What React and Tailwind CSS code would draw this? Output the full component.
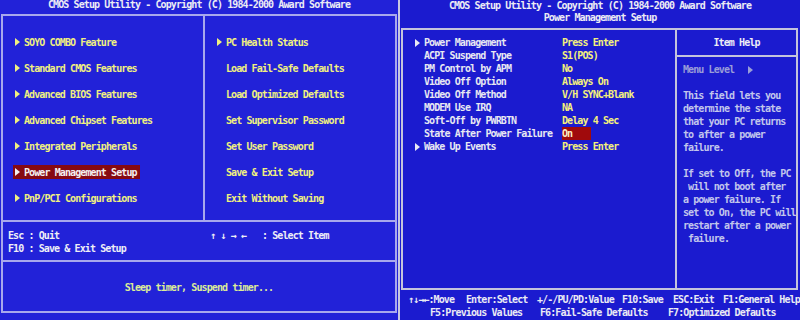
import React from 'react';

const mono = "font-['DejaVu_Sans_Mono',monospace] text-[10px] font-bold tracking-[-0.9px] whitespace-pre";

function Tri({ className = '' }) {
  return (
    <svg width="5" height="8" viewBox="0 0 5 8" className={`shrink-0 ${className}`}>
      <path d="M0 0L5 4L0 8Z" fill="currentColor" />
    </svg>
  );
}

const leftMenu = [
  ['SOYO COMBO Feature', true],
  ['Standard CMOS Features', true],
  ['Advanced BIOS Features', true],
  ['Advanced Chipset Features', true],
  ['Integrated Peripherals', true],
  ['Power Management Setup', true, 'sel'],
  ['PnP/PCI Configurations', true],
];

const rightMenu = [
  ['PC Health Status', true],
  ['Load Fail-Safe Defaults', false],
  ['Load Optimized Defaults', false],
  ['Set Supervisor Password', false],
  ['Set User Password', false],
  ['Save & Exit Setup', false],
  ['Exit Without Saving', false],
];

const pmItems = [
  ['Power Management', 'Press Enter', true],
  ['ACPI Suspend Type', 'S1(POS)'],
  ['PM Control by APM', 'No'],
  ['Video Off Option', 'Always On'],
  ['Video Off Method', 'V/H SYNC+Blank'],
  ['MODEM Use IRQ', 'NA'],
  ['Soft-Off by PWRBTN', 'Delay 4 Sec'],
  ['State After Power Failure', 'On', false, true],
  ['Wake Up Events', 'Press Enter', true],
];

const helpLines = [
  'This field lets you',
  'determine the state',
  'that your PC returns',
  'to after a power',
  'failure.',
  '',
  'If set to Off, the PC',
  ' will not boot after',
  'a power failure. If',
  'set to On, the PC will',
  'restart after a power',
  ' failure.',
];

function MenuCol({ items, width }) {
  return (
    <div className={`${width} pt-[13px] flex flex-col`}>
      {items.map(([label, arrow, sel]) => (
        <div key={label} className="h-[26px] pl-[10px] flex items-center">
          <span
            className={`h-[14px] pl-[2px] pr-[3px] flex items-center gap-[4px] ${
              sel ? 'bg-[#860a12] text-[#f4f0f0]' : 'text-[#f0f080]'
            }`}
          >
            {arrow ? <Tri /> : <span className="w-[5px]" />}
            <span>{label}</span>
          </span>
        </div>
      ))}
    </div>
  );
}

function MainMenu() {
  return (
    <div className="w-[398px] h-[320px] bg-[#2222d8] flex flex-col">
      <div className="h-[14px] leading-[9px] text-center text-[#ececf4]">
        CMOS Setup Utility - Copyright (C) 1984-2000 Award Software
      </div>
      <div className="ml-[1px] mr-[1px] h-[299px] border-2 border-[#a8a8ec] flex flex-col">
        <div className="h-[206px] flex border-b-2 border-[#a8a8ec]">
          <div className="w-[202px] border-r-2 border-[#a8a8ec] flex">
            <MenuCol items={leftMenu} width="flex-1" />
          </div>
          <MenuCol items={rightMenu} width="flex-1" />
        </div>
        <div className="h-[40px] border-b-2 border-[#a8a8ec] pt-[7px] leading-[13px] text-[#eeeef6] flex">
          <div className="w-[207px] pl-[5px]">
            <div>Esc : Quit</div>
            <div>F10 : Save &amp; Exit Setup</div>
          </div>
          <div className="w-[52px]">↑ ↓ → ←</div>
          <div>: Select Item</div>
        </div>
        <div className="flex-1 pt-[2px] flex items-center justify-center text-[#dcec98]">
          Sleep timer, Suspend timer...
        </div>
      </div>
    </div>
  );
}

function PowerSetup() {
  return (
    <div className="w-[400px] h-[320px] bg-[#1b1bcf] flex flex-col">
      <div className="h-[28px] leading-[12px] text-center text-[#ececf4]">
        <div>CMOS Setup Utility - Copyright (C) 1984-2000 Award Software</div>
        <div>Power Management Setup</div>
      </div>
      <div className="ml-[1px] mr-[2px] h-[262px] border-2 border-[#c4c4dc] flex">
        <div className="w-[274px] border-r-2 border-[#c4c4dc] pt-[6px] pl-[12px] leading-[13px]">
          {pmItems.map(([label, value, arrow, sel]) => (
            <div key={label} className="h-[13px] flex items-center">
              <span className="w-[9px] flex text-[#eaeaf4]">{arrow ? <Tri /> : null}</span>
              <span className="w-[138px] text-[#e8e8f2]">{label}</span>
              <span
                className={`h-[13px] ${
                  sel ? 'w-[29px] bg-[#a00a0c] text-[#f8f0c8]' : 'text-[#f4f07c]'
                }`}
              >
                {value}
              </span>
            </div>
          ))}
        </div>
        <div className="flex-1 flex flex-col">
          <div className="h-[27px] border-b-2 border-[#c4c4dc] flex items-center justify-center text-[#eeeef6]">
            Item Help
          </div>
          <div className="pt-[6px] pl-[6px] leading-[13px] text-[#c2c6ec]">
            <div className="flex items-center text-[#9a9ed8]">
              <span>Menu Level</span>
              <Tri className="ml-[14px]" />
            </div>
            <div className="h-[13px]" />
            {helpLines.map((l, i) => (
              <div key={i} className="h-[13px]">
                {l}
              </div>
            ))}
          </div>
        </div>
      </div>
      <div className="pt-[3px] leading-[13px] text-[#eaeaf4]">
        <div className="flex pl-[8px]">
          <span className="w-[58px]">↑↓→←:Move</span>
          <span className="w-[71px]">Enter:Select</span>
          <span className="w-[85px]">+/-/PU/PD:Value</span>
          <span className="w-[51px]">F10:Save</span>
          <span className="w-[50px]">ESC:Exit</span>
          <span>F1:General Help</span>
        </div>
        <div className="flex pl-[30px]">
          <span className="w-[110px]">F5:Previous Values</span>
          <span className="w-[128px]">F6:Fail-Safe Defaults</span>
          <span>F7:Optimized Defaults</span>
        </div>
      </div>
    </div>
  );
}

export default function App() {
  return (
    <div className={`w-[800px] h-[320px] flex overflow-hidden ${mono}`}>
      <MainMenu />
      <div className="w-[2px] h-[320px] bg-[#c8c8e0]" />
      <PowerSetup />
    </div>
  );
}
